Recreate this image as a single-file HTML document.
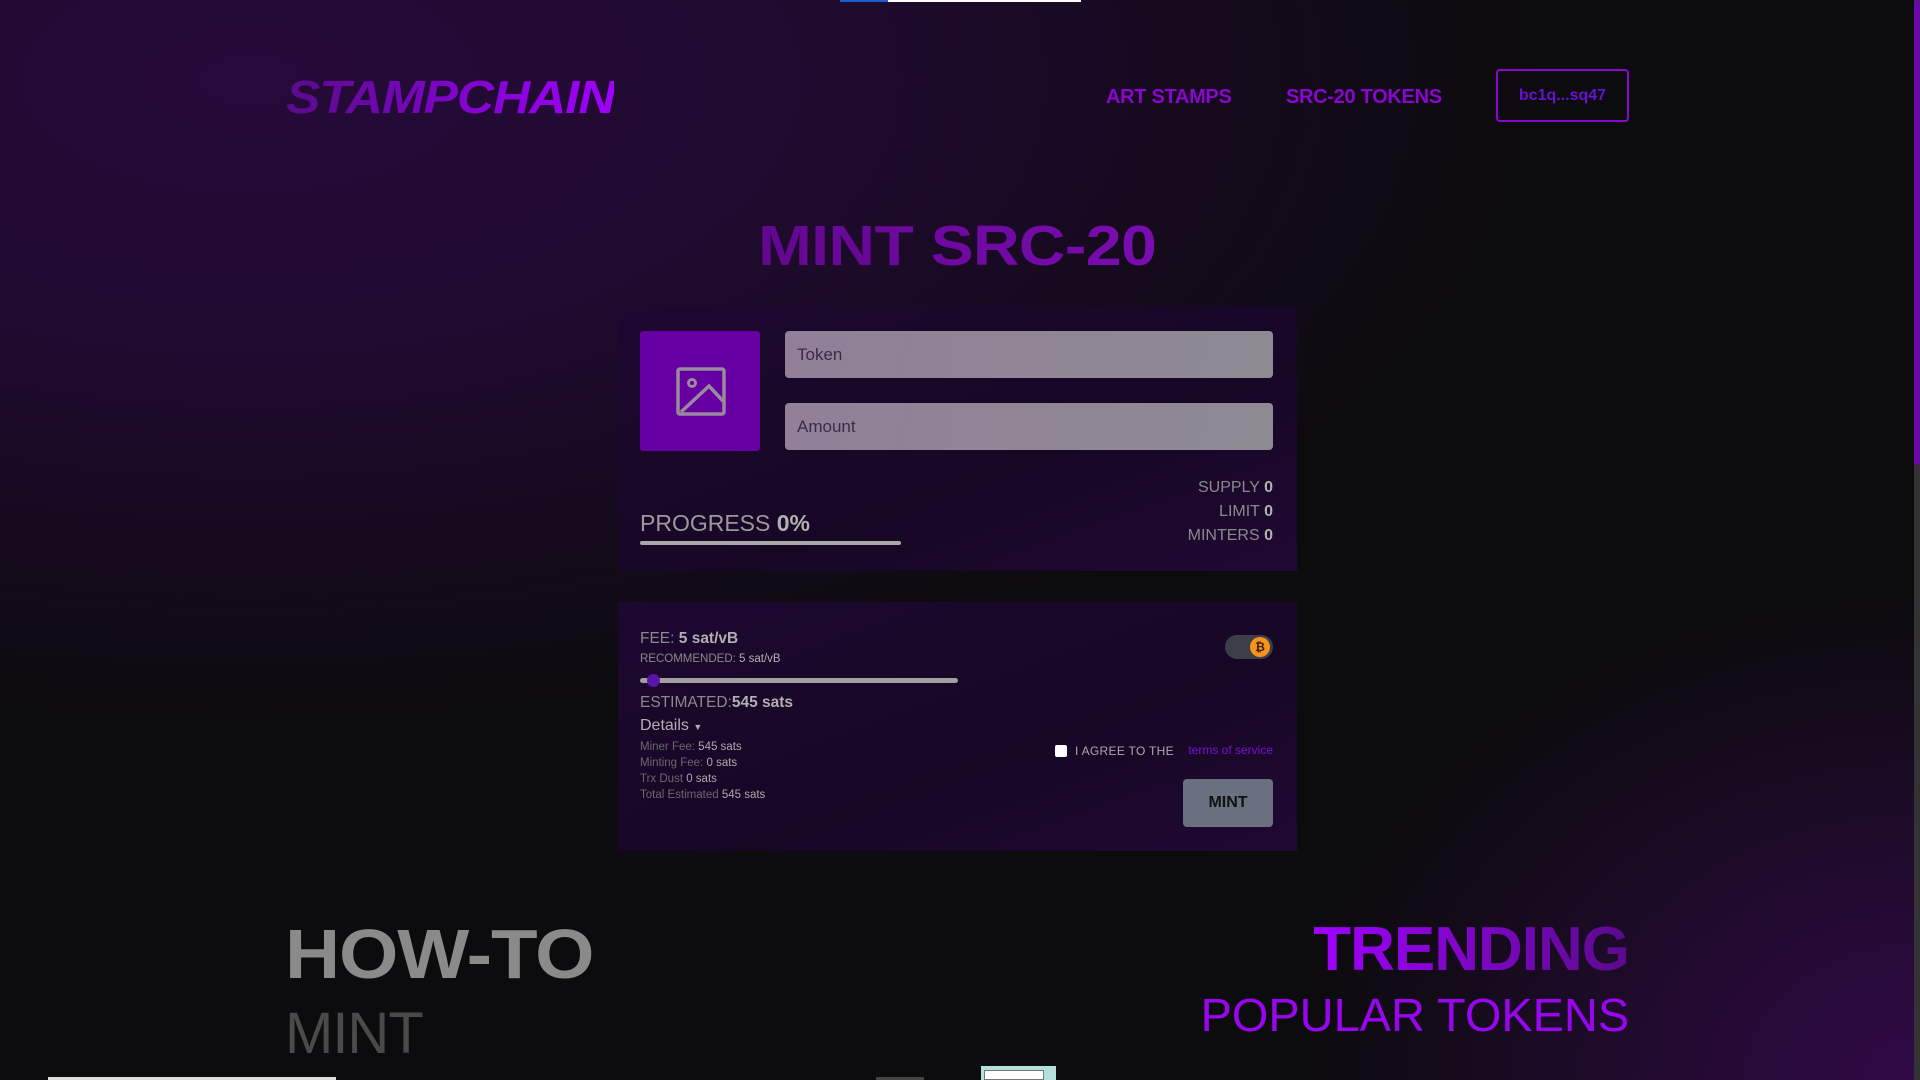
<!DOCTYPE html>
<html><head><meta charset="utf-8"><style>
*{margin:0;padding:0;box-sizing:border-box}
html,body{width:1920px;height:1080px;overflow:hidden}
body{font-family:"Liberation Sans",sans-serif;position:relative;
background:
radial-gradient(ellipse 900px 700px at 1920px 1080px, rgba(60,10,90,0.75), rgba(30,8,45,0) 70%),
radial-gradient(ellipse 1300px 650px at 250px 80px, #260a3a 0%, #1f0a2e 45%, rgba(20,8,28,0) 100%),
#0c0b0d;}
.abs{position:absolute}
.grad1{background:linear-gradient(90deg,#5a0b8c,#a100ff);-webkit-background-clip:text;background-clip:text;color:transparent}
.grad2{background:linear-gradient(90deg,#a100ff,#5a0b8c);-webkit-background-clip:text;background-clip:text;color:transparent}
.nav{color:#8a05d0;font-weight:900;font-size:20px;top:86px;letter-spacing:-0.3px}
.panel{left:618px;width:679px;background:linear-gradient(160deg,#1d0830,#170725 60%,#200833)}
.inp{left:785px;width:488px;height:47px;border-radius:4px;background:linear-gradient(100deg,#918098,#8e8a92);color:#3d2a48;font-size:17px;padding:14px 12px}
.g{color:#8a8a8a}
.b{color:#b0b0b0;font-weight:bold}
.s12{font-size:12px}
</style></head><body>
<div class="abs" style="left:840px;top:0;width:48px;height:2px;background:#1a5fd0"></div>
<div class="abs" style="left:888px;top:0;width:193px;height:2px;background:#fff"></div>

<div class="abs grad1" style="left:286px;top:70px;font-size:46px;font-weight:900;font-style:italic;letter-spacing:-1px;transform:scaleX(1.12);transform-origin:left top">STAMPCHAIN</div>
<div class="abs nav" style="left:1106px">ART STAMPS</div>
<div class="abs nav" style="left:1286px">SRC-20 TOKENS</div>
<div class="abs" style="left:1496px;top:69px;width:133px;height:53px;border:2px solid #8a05d0;border-radius:4px;color:#6a10d0;font-weight:900;font-size:16px;text-align:center;line-height:49px">bc1q...sq47</div>

<div class="abs" style="left:0;width:1920px;top:213px;text-align:center;padding-right:5px"><span style="display:inline-block;transform:scaleX(1.13);font-size:57px;font-weight:900;background:linear-gradient(90deg,#62078f,#7a0cb0);-webkit-background-clip:text;background-clip:text;color:transparent;letter-spacing:-0.5px">MINT SRC-20</span></div>

<div class="abs panel" style="top:306px;height:265px"></div>
<div class="abs" style="left:640px;top:331px;width:120px;height:120px;background:#6600a3;border-radius:3px">
<svg width="120" height="120" viewBox="0 0 120 120"><rect x="38" y="38" width="46" height="45" rx="2" fill="none" stroke="#9a8a9e" stroke-width="3.5"/><circle cx="52" cy="52" r="3.5" fill="none" stroke="#9a8a9e" stroke-width="3"/><path d="M41 81 L69 55 L83 70" fill="none" stroke="#9a8a9e" stroke-width="3.5"/></svg></div>
<div class="abs inp" style="top:331px">Token</div>
<div class="abs inp" style="top:403px">Amount</div>
<div class="abs g" style="right:647px;top:476px;font-size:16px;text-align:right;line-height:24px">SUPPLY <span class="b">0</span><br>LIMIT <span class="b">0</span><br>MINTERS <span class="b">0</span></div>
<div class="abs g" style="left:640px;top:510px;font-size:23px;color:#9a9a9a">PROGRESS <span class="b" style="color:#b0b0b0">0%</span></div>
<div class="abs" style="left:640px;top:541px;width:261px;height:4px;border-radius:2px;background:#a8a8a8"></div>

<div class="abs panel" style="top:602px;height:249px"></div>
<div class="abs g" style="left:640px;top:630px;font-size:15.5px">FEE: <span class="b">5 sat/vB</span></div>
<div class="abs g s12" style="left:640px;top:653px;font-size:11.5px">RECOMMENDED: <span style="color:#b0b0b0">5 sat/vB</span></div>
<div class="abs" style="left:640px;top:678px;width:318px;height:5px;border-radius:3px;background:#a0a0a0"></div>
<div class="abs" style="left:647px;top:674px;width:13px;height:13px;border-radius:50%;background:#5a14a8"></div>
<div class="abs g" style="left:640px;top:694px;font-size:15.5px">ESTIMATED:<span class="b">545 sats</span></div>
<div class="abs" style="left:640px;top:717px;font-size:16px;color:#b0b0b0">Details <span style="font-size:9px">&#9660;</span></div>
<div class="abs s12" style="left:640px;top:739px;line-height:16px;color:#6a6a6a;font-size:11.5px">Miner Fee: <span style="color:#aaa">545 sats</span><br>Minting Fee: <span style="color:#aaa">0 sats</span><br>Trx Dust <span style="color:#aaa">0 sats</span><br>Total Estimated <span style="color:#aaa">545 sats</span></div>
<div class="abs" style="left:1225px;top:635px;width:48px;height:24px;border-radius:12px;background:#3c3f4a"></div>
<div class="abs" style="left:1250px;top:637px;width:20px;height:20px;border-radius:50%;background:#f7931a;color:#3a2000;font-size:12px;font-weight:bold;text-align:center;line-height:20px">&#8383;</div>
<div class="abs" style="left:1055px;top:745px;width:12px;height:12px;background:#fff;border-radius:2px"></div>
<div class="abs" style="left:1075px;top:744px;font-size:12px;color:#aaa;letter-spacing:0.3px">I AGREE TO THE</div>
<div class="abs" style="right:647px;top:743px;font-size:12px;color:#7a10d0">terms of service</div>
<div class="abs" style="left:1183px;top:779px;width:90px;height:48px;border-radius:4px;background:#6b7080;color:#111;font-weight:bold;font-size:16px;text-align:center;line-height:48px">MINT</div>

<div class="abs" style="left:285px;top:914px;font-size:70px;font-weight:900;color:#8a8a8a;letter-spacing:-1px;transform:scaleX(1.09);transform-origin:left top">HOW-TO</div>
<div class="abs" style="left:285px;top:1000px;font-size:58px;font-weight:100;color:#4a4a4a;letter-spacing:-1px">MINT</div>
<div class="abs grad2" style="right:291px;top:914px;font-size:62px;font-weight:900;letter-spacing:-1px">TRENDING</div>
<div class="abs" style="right:291px;top:988px;font-size:46px;color:#9a05f0;transform:scaleX(1.02);transform-origin:right top">POPULAR TOKENS</div>

<div class="abs" style="left:48px;top:1077px;width:288px;height:3px;background:#ddd"></div>
<div class="abs" style="left:876px;top:1077px;width:48px;height:3px;background:#444"></div>
<div class="abs" style="left:981px;top:1066px;width:75px;height:14px;background:#b4e0dc"></div>
<div class="abs" style="left:984px;top:1070px;width:60px;height:10px;background:#fff;border:1px solid #777"></div>
<div class="abs" style="left:1914px;top:0;width:6px;height:1080px;background:#333"></div>
<div class="abs" style="left:1914px;top:0;width:6px;height:465px;background:#6a08a8;border-radius:3px"></div>
</body></html>
